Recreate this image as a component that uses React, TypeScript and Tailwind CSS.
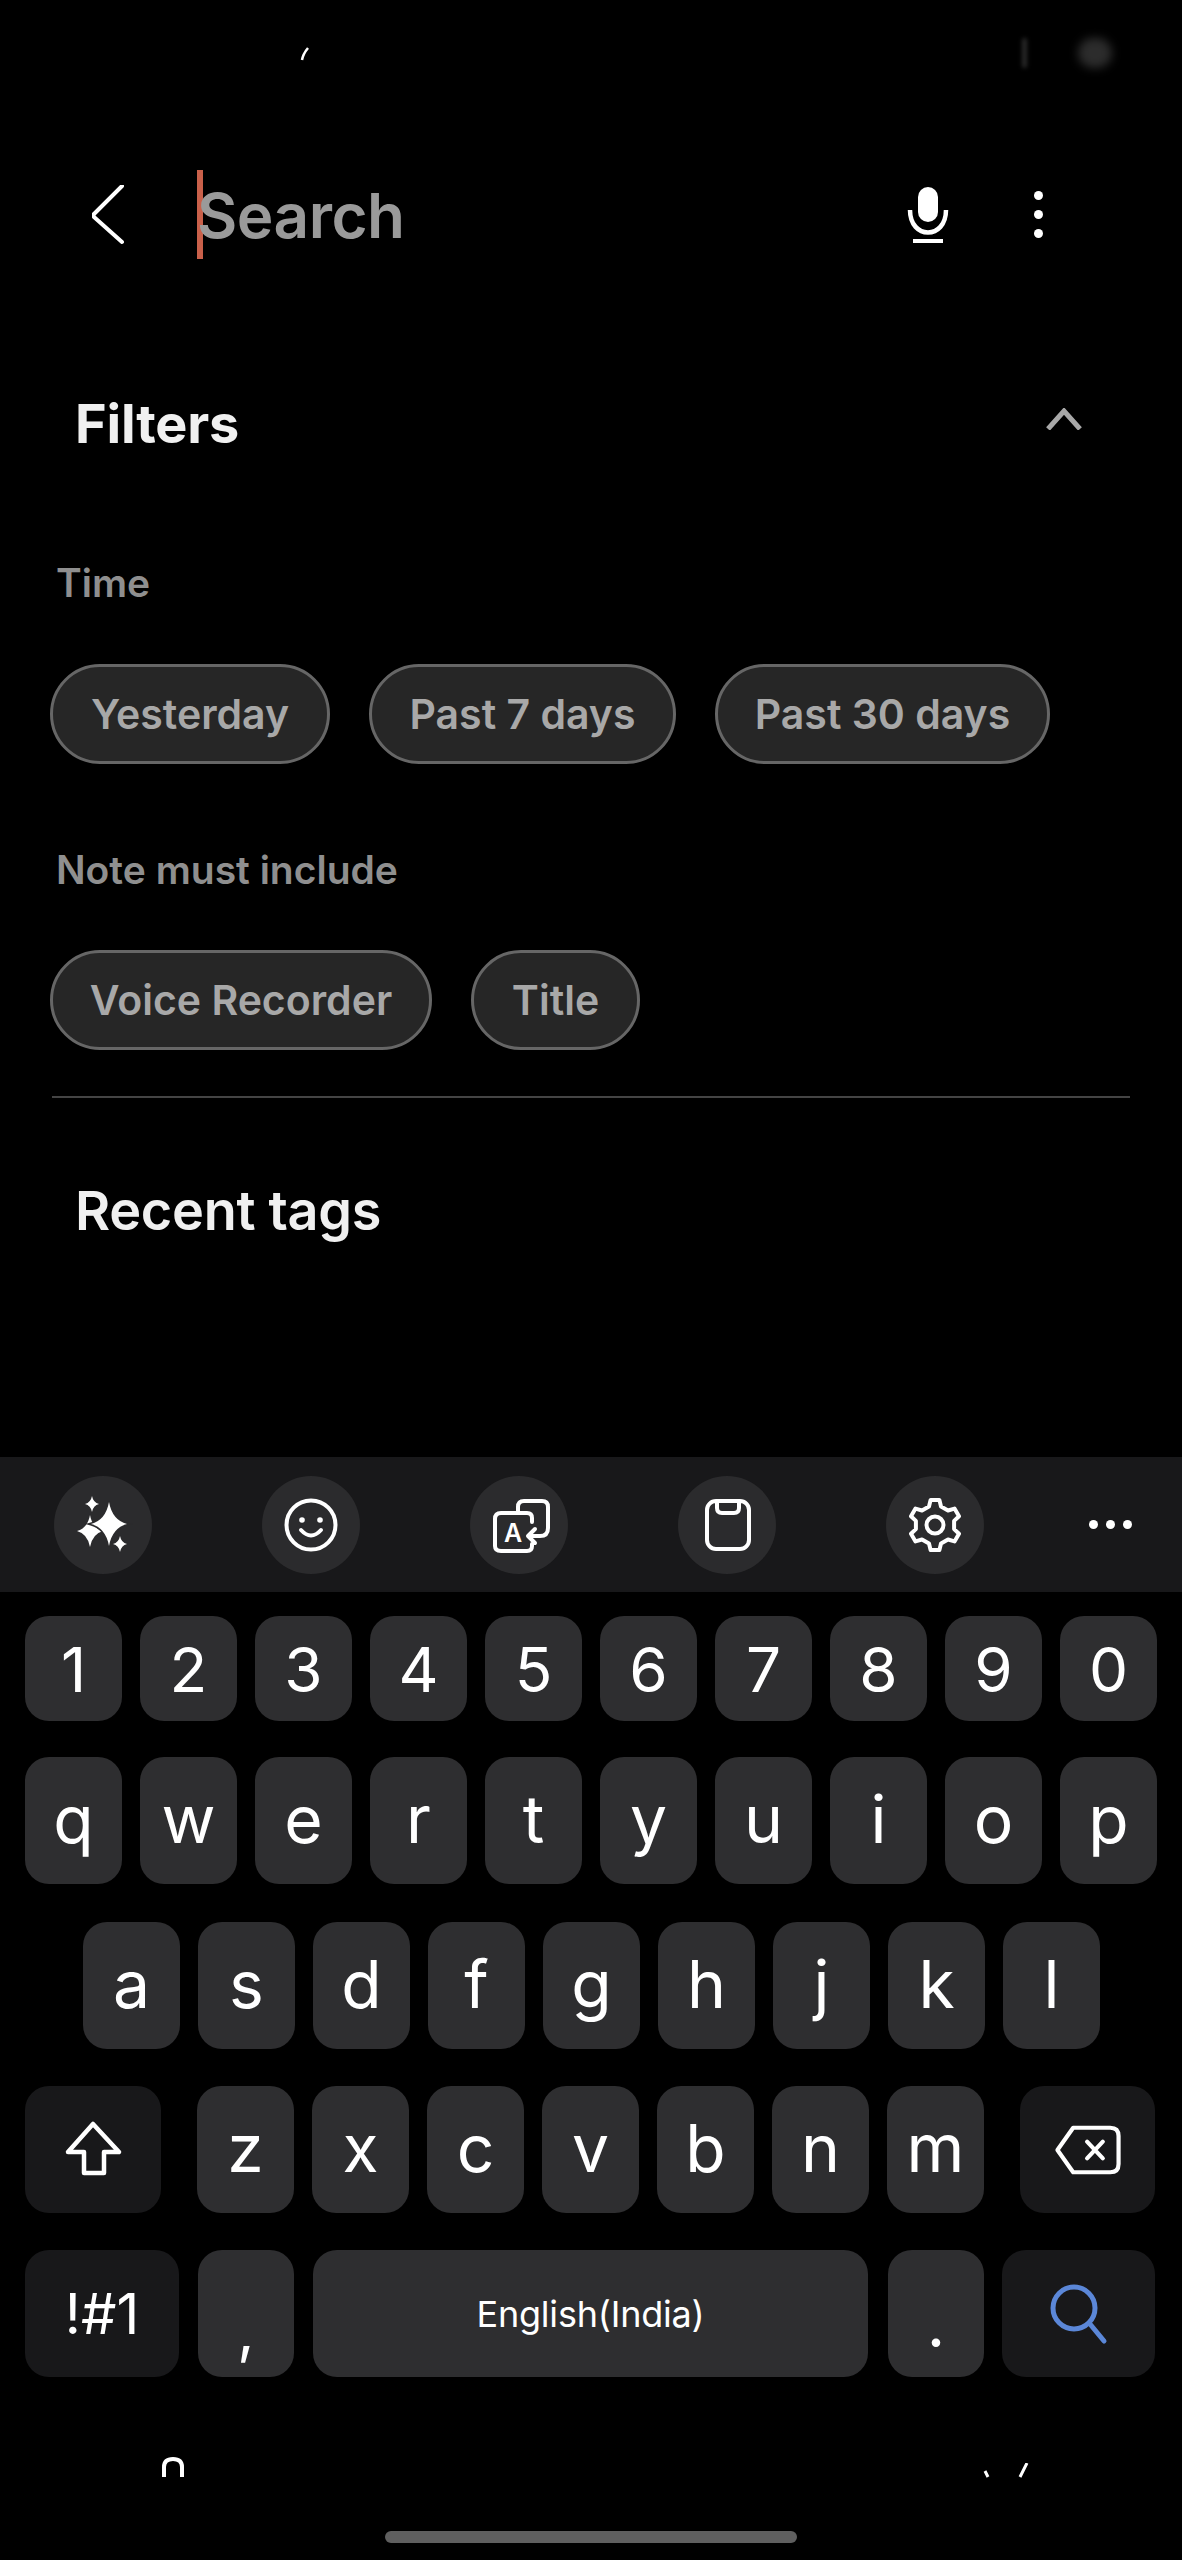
import { FC, ReactNode } from 'react'

const star = (cx: number, cy: number, rx: number, ry: number) => {
  const kx = rx * 0.18
  const ky = ry * 0.18
  return `M${cx} ${cy - ry}Q${cx + kx} ${cy - ky} ${cx + rx} ${cy}Q${cx + kx} ${cy + ky} ${cx} ${cy + ry}Q${cx - kx} ${cy + ky} ${cx - rx} ${cy}Q${cx - kx} ${cy - ky} ${cx} ${cy - ry}Z`
}

const gearPoints = () => {
  const pts: string[] = []
  for (let k = 0; k < 6; k++) {
    const t = 90 + k * 60
    for (const [a, r] of [[-18, 19.5], [-10, 25.5], [10, 25.5], [18, 19.5]]) {
      const rad = ((t + a) * Math.PI) / 180
      pts.push(`${(28 + r * Math.cos(rad)).toFixed(1)},${(28 - r * Math.sin(rad)).toFixed(1)}`)
    }
  }
  return pts.join(' ')
}

const Chip: FC<{ label: string; width: string }> = ({ label, width }) => (
  <div className={`${width} h-[100px] pt-[2px] flex items-center justify-center rounded-full bg-[#262626] border-[3px] border-[#666666] text-[#a8a8a8] text-[41px] font-semibold`}>
    {label}
  </div>
)

const Key: FC<{ children: ReactNode; className?: string }> = ({ children, className }) => (
  <div className={`h-full flex items-center justify-center rounded-[24px] text-white ${className ?? 'w-[97px] bg-[#2e2e30]'}`}>
    {children}
  </div>
)

const ToolButton: FC<{ children: ReactNode }> = ({ children }) => (
  <div className="w-[98px] h-[98px] rounded-full bg-[#2b2b2d] flex items-center justify-center">{children}</div>
)

const letter = 'text-[66px] leading-none font-normal pb-[3px]'

const App: FC = () => {
  return (
    <div className="w-[1182px] h-[2560px] bg-black flex flex-col font-['Inter',sans-serif] overflow-hidden">
      {/* what is left of the status bar */}
      <div className="h-[170px] relative">
        <svg className="absolute left-[298px] top-[46px]" width="14" height="16" viewBox="0 0 14 16">
          <path d="M4 14 Q5 8 10 2" stroke="#fff" strokeWidth="2.5" fill="none" />
        </svg>
        <div className="absolute left-[1078px] top-[38px] w-[34px] h-[30px] rounded-full bg-[#2c2c2c] blur-[5px]" />
        <div className="absolute left-[1022px] top-[38px] w-[5px] h-[30px] rounded-full bg-[#2a2a2a] blur-[2px]" />
      </div>

      <div className="h-[89px] flex items-center pl-[92px] pr-[139px]">
        <svg width="32" height="60" viewBox="0 0 32 60" className="shrink-0">
          <path d="M30 2 L2 30 Q1 31 2 33 L30 58" transform="translate(0 -1)" stroke="#fff" strokeWidth="4" fill="none" strokeLinecap="round" />
        </svg>
        <div className="ml-[73px] w-[6px] h-[89px] bg-[#c9604a]" />
        <span className="-ml-[6px] pt-[2px] text-[62px] leading-none font-semibold text-[#9a9a9a] tracking-[-0.5px]">Search</span>
        <svg width="56" height="70" viewBox="0 0 56 70" className="ml-auto shrink-0">
          <rect x="18" y="7" width="20" height="35" rx="10" fill="#fff" />
          <path d="M10 30 C10 60 46 60 46 30" stroke="#fff" strokeWidth="4.5" fill="none" />
          <rect x="13" y="59" width="30" height="4" fill="#fff" />
        </svg>
        <div className="ml-[78px] flex flex-col gap-[10px]">
          <div className="w-[9px] h-[9px] rounded-full bg-white" />
          <div className="w-[9px] h-[9px] rounded-full bg-white" />
          <div className="w-[9px] h-[9px] rounded-full bg-white" />
        </div>
      </div>

      <div className="mt-[134px] h-[60px] flex items-center justify-between pl-[75px] pr-[100px]">
        <h2 className="text-[54px] pt-[2px] leading-none font-bold text-[#f0f0f0] tracking-[-0.2px]">Filters</h2>
        <svg width="36" height="22" viewBox="0 0 36 22" className="mb-[8px]">
          <path d="M2 21 L18 3 L34 21" stroke="#a8a8a8" strokeWidth="5" fill="none" />
        </svg>
      </div>

      <div className="mt-[105px] h-[50px] pl-[56px] flex items-center text-[39px] font-semibold text-[#8f8f8f]">Time</div>
      <div className="mt-[56px] pl-[50px] flex gap-[39px]">
        <Chip label="Yesterday" width="w-[280px]" />
        <Chip label="Past 7 days" width="w-[307px]" />
        <Chip label="Past 30 days" width="w-[335px]" />
      </div>

      <div className="mt-[81px] h-[50px] pl-[56px] flex items-center text-[39px] font-semibold text-[#8f8f8f]">Note must include</div>
      <div className="mt-[55px] pl-[50px] flex gap-[39px]">
        <Chip label="Voice Recorder" width="w-[382px]" />
        <Chip label="Title" width="w-[169px]" />
      </div>

      <div className="mt-[46px] ml-[52px] w-[1078px] h-[2px] bg-[#444444]" />

      <div className="mt-[83px] h-[60px] pl-[75px] flex items-center">
        <h2 className="text-[54px] leading-none font-semibold text-[#f0f0f0] tracking-[-0.3px]">Recent tags</h2>
      </div>

      {/* keyboard toolbar */}
      <div className="mt-[216px] h-[135px] bg-[#18181a] flex items-center pl-[54px] gap-[110px]">
        <ToolButton>
          <svg width="60" height="60" viewBox="0 0 60 60" fill="#fff" className="ml-[5px]">
            <path d={star(14, 36, 13, 16)} />
            <path d={star(33, 29, 18, 22)} stroke="#2b2b2d" strokeWidth="3" paintOrder="stroke" />
            <path d={star(16, 9, 7, 8)} />
            <path d={star(44, 49, 7, 8)} />
          </svg>
        </ToolButton>
        <ToolButton>
          <svg width="56" height="56" viewBox="0 0 56 56" fill="none" stroke="#fff" strokeWidth="4" strokeLinecap="round">
            <circle cx="28" cy="28" r="24.5" />
            <circle cx="19" cy="23" r="2.8" fill="#fff" stroke="none" />
            <circle cx="37" cy="23" r="2.8" fill="#fff" stroke="none" />
            <path d="M18 33 Q28 44 38 33" />
          </svg>
        </ToolButton>
        <ToolButton>
          <svg width="64" height="64" viewBox="0 0 64 64" fill="none" stroke="#fff" strokeWidth="4" strokeLinecap="round" strokeLinejoin="round" className="mt-[6px] ml-[4px]">
            <path d="M43 26 V22 Q43 17 38 17 H12 Q6 17 6 23 V50 Q6 55 12 55 H38 Q43 55 43 50 V48" />
            <path d="M29 16 V11 Q29 5 35 5 H53 Q59 5 59 11 V32 Q59 40 51 40 H40" />
            <path d="M46 33 L39 40 L46 47" />
            <text x="24" y="46" fill="#fff" stroke="none" fontSize="25" fontWeight="600" textAnchor="middle" fontFamily="Inter, sans-serif">A</text>
          </svg>
        </ToolButton>
        <ToolButton>
          <svg width="48" height="54" viewBox="0 0 48 54" fill="none" stroke="#fff" strokeWidth="4" className="ml-[2px]">
            <rect x="3" y="3" width="42" height="48" rx="9" />
            <path d="M13 3 V10 Q13 15 18 15 H30 Q35 15 35 10 V3" />
          </svg>
        </ToolButton>
        <ToolButton>
          <svg width="56" height="56" viewBox="0 0 56 56" fill="none" stroke="#fff" strokeWidth="4" strokeLinejoin="round">
            <polygon points={gearPoints()} />
            <circle cx="28" cy="28" r="8.5" />
          </svg>
        </ToolButton>
        <div className="-ml-[5px] flex gap-[8px]">
          <div className="w-[9px] h-[9px] rounded-full bg-white" />
          <div className="w-[9px] h-[9px] rounded-full bg-white" />
          <div className="w-[9px] h-[9px] rounded-full bg-white" />
        </div>
      </div>

      {/* keys */}
      <div className="mt-[24px] h-[105px] px-[25px] flex gap-[18px]">
        {['1', '2', '3', '4', '5', '6', '7', '8', '9', '0'].map(k => (
          <Key key={k} className="flex-1 bg-[#2e2e30] text-[62px] leading-none font-normal pt-[2px]">{k}</Key>
        ))}
      </div>
      <div className="mt-[36px] h-[127px] px-[25px] flex gap-[18px]">
        {['q', 'w', 'e', 'r', 't', 'y', 'u', 'i', 'o', 'p'].map(k => (
          <Key key={k} className={`flex-1 bg-[#2e2e30] ${letter}`}>{k}</Key>
        ))}
      </div>
      <div className="mt-[38px] h-[127px] pl-[83px] flex gap-[18px]">
        {['a', 's', 'd', 'f', 'g', 'h', 'j', 'k', 'l'].map(k => (
          <Key key={k} className={`w-[97px] bg-[#2e2e30] ${letter}`}>{k}</Key>
        ))}
      </div>
      <div className="mt-[37px] h-[127px] px-[25px] flex">
        <Key className="w-[136px] bg-[#18181a]">
          <svg width="100" height="100" viewBox="0 0 100 100" fill="none" stroke="#fff" strokeWidth="4.5" strokeLinejoin="round" className="ml-[14px]">
            <polygon points="43,24 69,52 54,52 54,73 34,73 34,52 18,52" />
          </svg>
        </Key>
        <div className="ml-[36px] flex gap-[18px]">
          {['z', 'x', 'c', 'v', 'b', 'n', 'm'].map(k => (
            <Key key={k} className={`w-[97px] bg-[#2e2e30] ${letter}`}>{k}</Key>
          ))}
        </div>
        <Key className="ml-[36px] w-[135px] bg-[#18181a]">
          <svg width="68" height="50" viewBox="0 0 72 54" fill="none" stroke="#fff" strokeWidth="4.5" strokeLinejoin="round" strokeLinecap="round">
            <path d="M3 27 L20 3 H60 Q69 3 69 12 V42 Q69 51 60 51 H20 Z" />
            <path d="M35 18 L52 36 M52 18 L35 36" />
          </svg>
        </Key>
      </div>
      <div className="mt-[37px] h-[127px] px-[25px] flex">
        <Key className="w-[154px] bg-[#18181a] text-[56px] font-normal leading-none">!#1</Key>
        <Key className="ml-[19px] w-[96px] bg-[#2e2e30] text-[60px] leading-none font-normal pt-[32px]">,</Key>
        <Key className="ml-[19px] w-[555px] bg-[#2e2e30] text-[36px] leading-none tracking-[-0.2px]">English(India)</Key>
        <Key className="ml-[20px] w-[96px] bg-[#2e2e30] text-[64px] leading-none font-normal pt-[20px]">.</Key>
        <Key className="ml-[18px] w-[153px] bg-[#18181a]">
          <svg width="64" height="64" viewBox="0 0 64 64" fill="none" stroke="#5b87d8" strokeWidth="5" strokeLinecap="round">
            <ellipse cx="27" cy="26" rx="21" ry="21" />
            <path d="M43 42 L57 59" />
          </svg>
        </Key>
      </div>

      {/* cut off nav icons */}
      <div className="mt-[80px] h-[20px] pl-[161px] flex items-start">
        <svg width="24" height="20" viewBox="0 0 24 20" fill="none" stroke="#fff" strokeWidth="4">
          <path d="M3 20 V10 Q3 2 12 2 Q21 2 21 10 V20" />
        </svg>
        <svg width="48" height="20" viewBox="0 0 48 20" className="ml-[797px] mt-[6px]" fill="none" stroke="#fff" strokeWidth="3">
          <path d="M3 8 L6 14 M45 0 L38 14" />
        </svg>
      </div>

      <div className="mt-[54px] flex justify-center">
        <div className="w-[412px] h-[12px] rounded-full bg-[#5f5f5f]" />
      </div>
    </div>
  )
}

export default App
